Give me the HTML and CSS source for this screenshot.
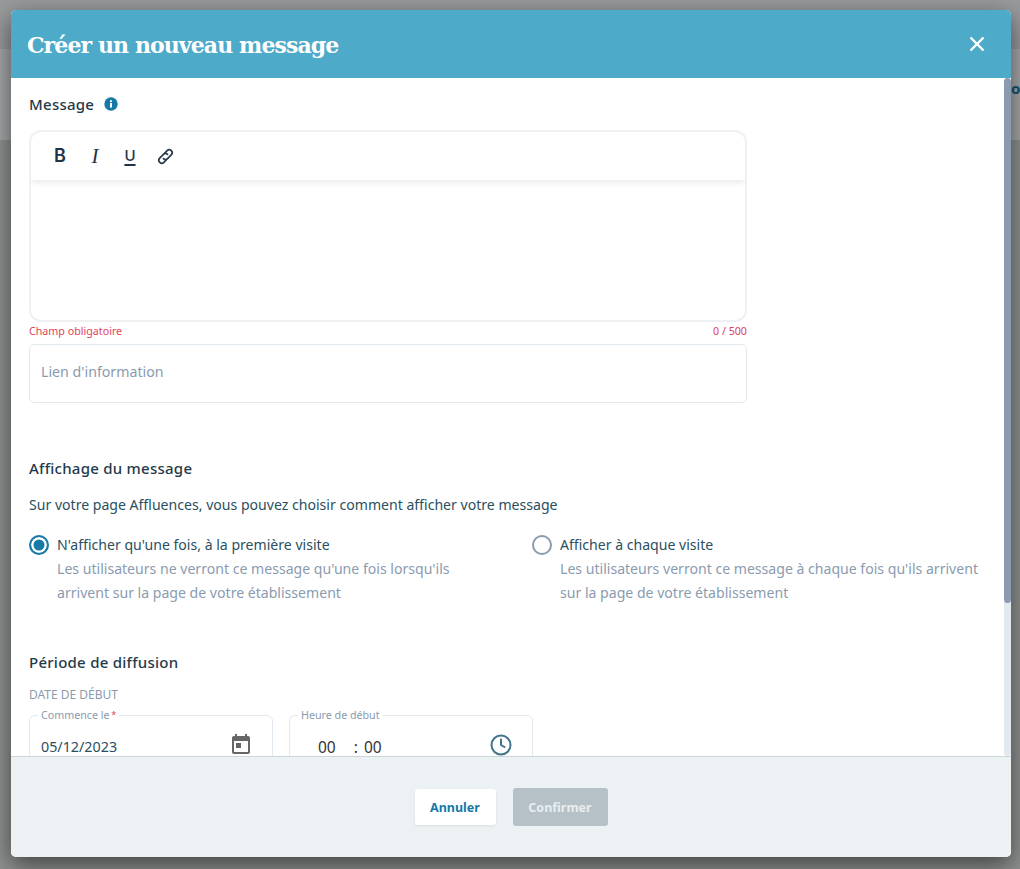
FILE: index.html
```html
<!DOCTYPE html>
<html lang="fr">
<head>
    <meta charset="UTF-8">
    <meta name="viewport" content="width=device-width, initial-scale=1.0">
    <title>Créer un nouveau message</title>
    <link rel="stylesheet" href="styles.css">
</head>
<body>
    <!-- Page behind the dialog -->
    <div class="backdrop">
        <div class="backdrop-top"></div>
        <div class="backdrop-band"><span>o</span></div>
    </div>

    <div class="modal">
        <header class="modal-header">
            <h1>Créer un nouveau message</h1>
            <button class="close-button" aria-label="Fermer">
                <svg width="16" height="16" viewBox="0 0 16 16"><path d="M1.5 1.5l13 13M14.5 1.5l-13 13" stroke="#fff" stroke-width="2.4" fill="none"/></svg>
            </button>
        </header>

        <div class="modal-main">
            <div class="modal-body">
                <div class="section-title title-message">
                    Message
                    <svg class="info-icon" width="14" height="14" viewBox="0 0 14 14"><circle cx="7" cy="7" r="6.7" fill="#1679a7"/><rect x="6" y="6" width="2" height="4.6" fill="#fff"/><rect x="6" y="3.3" width="2" height="1.8" fill="#fff"/></svg>
                </div>

                <div class="form-column">
                    <div class="editor">
                        <div class="toolbar">
                            <span class="tool tool-bold">B</span>
                            <span class="tool tool-italic">I</span>
                            <span class="tool tool-underline">U</span>
                            <span class="tool">
                                <svg width="21" height="21" viewBox="0 0 20 20" fill="none" stroke="#2a3b4d" stroke-width="1.6" stroke-linecap="round"><g transform="rotate(45 10 10)"><path d="M7.2 8.5V5a2.8 2.8 0 0 1 5.6 0v5a2.8 2.8 0 0 1-2.8 2.8"/><path d="M12.8 11.5V15a2.8 2.8 0 0 1-5.6 0v-5a2.8 2.8 0 0 1 2.8-2.8"/></g></svg>
                            </span>
                        </div>
                        <div class="editor-area"></div>
                    </div>
                    <div class="editor-hints">
                        <span>Champ obligatoire</span>
                        <span>0 / 500</span>
                    </div>
                    <div class="text-input">Lien d'information</div>
                </div>

                <div class="section-title title-display">Affichage du message</div>
                <p class="intro">Sur votre page Affluences, vous pouvez choisir comment afficher votre message</p>

                <div class="radio-grid">
                    <div class="radio-option">
                        <span class="radio radio-checked"></span>
                        <div>
                            <div class="radio-label">N'afficher qu'une fois, à la première visite</div>
                            <div class="radio-help">Les utilisateurs ne verront ce message qu'une fois lorsqu'ils arrivent sur la page de votre établissement</div>
                        </div>
                    </div>
                    <div class="radio-option">
                        <span class="radio"></span>
                        <div>
                            <div class="radio-label">Afficher à chaque visite</div>
                            <div class="radio-help">Les utilisateurs verront ce message à chaque fois qu'ils arrivent sur la page de votre établissement</div>
                        </div>
                    </div>
                </div>

                <div class="section-title title-period">Période de diffusion</div>
                <div class="date-heading">DATE DE DÉBUT</div>
                <div class="date-row">
                    <fieldset class="date-field">
                        <legend>Commence le <em>*</em></legend>
                        <span class="date-value">05/12/2023</span>
                        <svg width="24" height="24" viewBox="0 0 24 24" fill="#666"><path d="M19 3h-1V1h-2v2H8V1H6v2H5c-1.11 0-1.99.9-1.99 2L3 19c0 1.1.89 2 2 2h14c1.1 0 2-.9 2-2V5c0-1.1-.9-2-2-2zm0 16H5V8h14v11zM7 10h5v5H7z"/></svg>
                    </fieldset>
                    <fieldset class="date-field">
                        <legend>Heure de début</legend>
                        <span class="time-value"><span>00</span><span class="time-colon">:</span><span>00</span></span>
                        <svg width="24" height="24" viewBox="0 0 24 24" fill="none" stroke="#3f7489" stroke-width="2" stroke-linecap="round" stroke-linejoin="round"><circle cx="12" cy="12" r="9.5"/><path d="M12 6.5V12l3.5 2"/></svg>
                    </fieldset>
                </div>
            </div>
            <div class="scrollbar"><div class="scrollbar-thumb"></div></div>
        </div>

        <footer class="modal-footer">
            <button class="button button-cancel">Annuler</button>
            <button class="button button-confirm">Confirmer</button>
        </footer>
    </div>
</body>
</html>
```

FILE: styles.css
```css
* {
    box-sizing: border-box;
}

html, body {
    height: 100%;
}

body {
    margin: 0;
    overflow: hidden;
    font-family: "Noto Sans", sans-serif;
    color: #2a4f60;
    background-color: #8f9191;
}

/* Page behind the dialog, it only shows in the margins */
.backdrop {
    position: absolute;
    inset: 0;
}

.backdrop-top {
    height: 49px;
    background-color: #999a9b;
}

.backdrop-band {
    height: 91px;
    padding: 29px 0 0 1011px;
    background-color: #a6a7a8;
    color: #0d5378;
    font-weight: 700;
    font-size: 15px;
}

.modal {
    position: absolute;
    left: 11px;
    top: 10px;
    width: 1000px;
    height: 847px;
    display: flex;
    flex-direction: column;
    border-radius: 5px;
    background-color: #fff;
    box-shadow: 0 8px 24px rgba(0, 0, 0, 0.55);
    overflow: hidden;
}

.modal-header {
    flex: none;
    height: 68px;
    padding: 0 26px 0 16px;
    display: flex;
    align-items: center;
    justify-content: space-between;
    background-color: #4eaac9;
}

.modal-header h1 {
    margin: 0;
    padding-top: 2px;
    font-family: "DejaVu Serif", serif;
    font-size: 22px;
    font-weight: 700;
    letter-spacing: -0.9px;
    color: #fff;
}

.close-button {
    padding: 0;
    display: flex;
    border: none;
    background: none;
}

.modal-main {
    flex: 1;
    min-height: 0;
    display: flex;
}

.modal-body {
    flex: 1;
    min-width: 0;
    padding: 0 18px;
    overflow: hidden;
}

.scrollbar {
    flex: none;
    width: 7px;
    background-color: #e3eaef;
    border-radius: 4px;
}

.scrollbar-thumb {
    height: 525px;
    background-color: #8a9bb0;
    border-radius: 4px;
}

.section-title {
    font-size: 15px;
    font-weight: 500;
    letter-spacing: 0.25px;
    line-height: 20px;
    color: #1f3a4a;
}

.title-message {
    margin-top: 16px;
    display: flex;
    align-items: center;
    gap: 10px;
}

.title-display {
    margin-top: 55px;
}

.title-period {
    margin-top: 47px;
}

.form-column {
    width: 718px;
}

.editor {
    margin-top: 16px;
    height: 192px;
    border: 2px solid #eef0f2;
    border-radius: 12px;
    overflow: hidden;
}

.toolbar {
    height: 48px;
    padding-left: 14px;
    display: flex;
    align-items: center;
    gap: 5px;
    box-shadow: 0 3px 6px rgba(0, 0, 0, 0.08);
}

.tool {
    width: 30px;
    display: flex;
    justify-content: center;
    color: #1f3349;
    font-size: 18px;
    line-height: 20px;
}

.tool-bold {
    font-family: "Inter", sans-serif;
    font-weight: 600;
}

.tool-italic {
    font-family: "Liberation Serif", serif;
    font-style: italic;
    font-size: 21px;
}

.tool-underline {
    font-family: "Inter", sans-serif;
    font-size: 15px;
    font-weight: 500;
    text-decoration: underline;
    text-decoration-thickness: 2px;
    text-underline-offset: 3px;
}

.editor-hints {
    margin-top: 1px;
    display: flex;
    justify-content: space-between;
    font-size: 10.7px;
    line-height: 16px;
    color: #e0445c;
}

.text-input {
    margin-top: 5px;
    height: 59px;
    padding: 0 0 4px 11px;
    display: flex;
    align-items: center;
    border: 1px solid #e3eaef;
    border-radius: 5px;
    font-size: 14.2px;
    color: #8a9bb0;
}

.intro {
    margin: 17px 0 0;
    font-size: 14.08px;
    line-height: 20px;
}

.radio-grid {
    margin-top: 18px;
    display: grid;
    grid-template-columns: 503px 454px;
}

.radio-option {
    display: flex;
    gap: 8px;
    font-size: 14.08px;
    line-height: 24px;
}

.radio {
    flex: none;
    width: 20px;
    height: 20px;
    margin-top: 2px;
    border: 2px solid #8a9bb0;
    border-radius: 50%;
    background-color: #fff;
}

.radio-checked {
    border-color: #1679a7;
    background-color: #1679a7;
    box-shadow: inset 0 0 0 2.5px #fff;
}

.radio-help {
    max-width: 430px;
    color: #8a9bb0;
}

.date-heading {
    margin-top: 15px;
    font-size: 12px;
    line-height: 16px;
    color: #8a9bb0;
}

.date-row {
    margin-top: 5px;
    display: flex;
    gap: 16px;
}

.date-field {
    margin: 0;
    width: 244px;
    height: 66px;
    padding: 11px 19px 0 11px;
    display: flex;
    align-items: flex-start;
    justify-content: space-between;
    border: 1px solid #e3eaef;
    border-radius: 6px;
    font-size: 14.3px;
}

.date-field legend {
    padding: 0 3px;
    margin-left: -3px;
    font-size: 10.7px;
    line-height: 14px;
    color: #8a9bb0;
}

.date-field em {
    margin-left: -1px;
    font-style: normal;
    font-size: 9px;
    vertical-align: 1px;
    color: #e0445c;
}

.date-value {
    margin-top: 5px;
    line-height: 18px;
}

.time-value {
    margin: 6px 0 0 17px;
    display: flex;
    font-size: 15.5px;
    line-height: 16px;
    color: #333;
}

.time-colon {
    margin: 0 6px 0 18px;
}

.modal-footer {
    flex: none;
    height: 101px;
    display: flex;
    align-items: center;
    justify-content: center;
    gap: 17px;
    border-top: 1px solid #ced5d9;
    background-color: #ecf1f4;
}

.button {
    border: none;
    border-radius: 3px;
    font-family: "Noto Sans", sans-serif;
    font-size: 12.5px;
    font-weight: 700;
}

.button-cancel {
    width: 81px;
    height: 36px;
    background-color: #fff;
    color: #1679a7;
    box-shadow: 0 1px 3px rgba(0, 0, 0, 0.08);
}

.button-confirm {
    width: 95px;
    height: 38px;
    background-color: #b5c1c7;
    color: #e8edef;
}
```
